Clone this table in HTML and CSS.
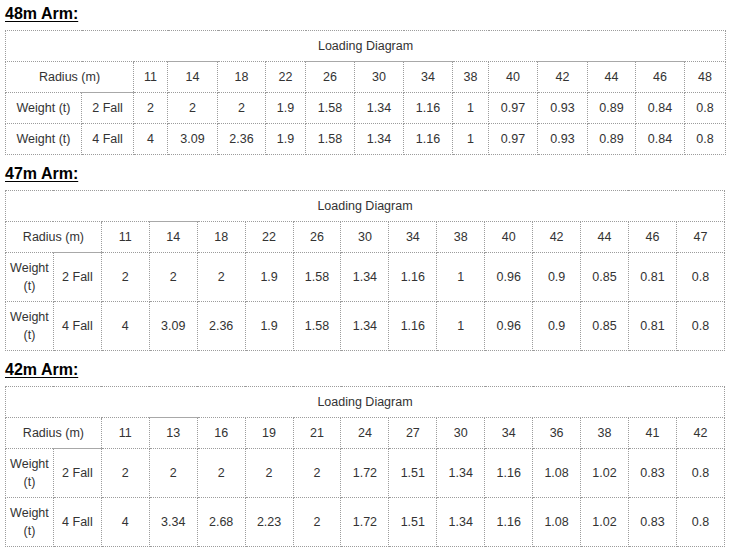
FILE: index.html
```html
<!DOCTYPE html>
<html>
<head>
<meta charset="utf-8">
<link rel="stylesheet" href="styles.css">
</head>
<body>
<div class="page">
  <section class="arm">
    <h2 class="arm-title">48m Arm:</h2>
    <table class="chart chart-auto">
      <colgroup>
        <col class="c76"><col class="c52"><col class="c34"><col class="c50"><col class="c48"><col class="c40"><col class="c49"><col class="c49"><col class="c49"><col class="c36"><col class="c49"><col class="c50"><col class="c48"><col class="c49"><col class="c41">
      </colgroup>
      <tr><td colspan="15">Loading Diagram</td></tr>
      <tr><td colspan="2">Radius (m)</td><td>11</td><td class="solid-top">14</td><td>18</td><td>22</td><td class="solid-top">26</td><td class="solid-top">30</td><td class="solid-top">34</td><td>38</td><td>40</td><td class="solid-top">42</td><td class="solid-top">44</td><td class="solid-top">46</td><td>48</td></tr>
      <tr><td>Weight (t)</td><td class="solid-top">2 Fall</td><td>2</td><td>2</td><td>2</td><td>1.9</td><td>1.58</td><td>1.34</td><td>1.16</td><td>1</td><td>0.97</td><td>0.93</td><td>0.89</td><td>0.84</td><td>0.8</td></tr>
      <tr><td>Weight (t)</td><td>4 Fall</td><td>4</td><td>3.09</td><td>2.36</td><td>1.9</td><td>1.58</td><td>1.34</td><td>1.16</td><td>1</td><td>0.97</td><td>0.93</td><td>0.89</td><td>0.84</td><td>0.8</td></tr>
    </table>
  </section>

  <section class="arm">
    <h2 class="arm-title">47m Arm:</h2>
    <table class="chart chart-even">
      <tr><td colspan="15">Loading Diagram</td></tr>
      <tr><td colspan="2">Radius (m)</td><td>11</td><td class="solid-top">14</td><td>18</td><td>22</td><td>26</td><td>30</td><td>34</td><td>38</td><td>40</td><td>42</td><td>44</td><td>46</td><td>47</td></tr>
      <tr><td>Weight (t)</td><td class="solid-top">2 Fall</td><td>2</td><td>2</td><td>2</td><td>1.9</td><td>1.58</td><td>1.34</td><td>1.16</td><td>1</td><td>0.96</td><td>0.9</td><td>0.85</td><td>0.81</td><td>0.8</td></tr>
      <tr><td>Weight (t)</td><td>4 Fall</td><td>4</td><td>3.09</td><td>2.36</td><td>1.9</td><td>1.58</td><td>1.34</td><td>1.16</td><td>1</td><td>0.96</td><td>0.9</td><td>0.85</td><td>0.81</td><td>0.8</td></tr>
    </table>
  </section>

  <section class="arm">
    <h2 class="arm-title">42m Arm:</h2>
    <table class="chart chart-even">
      <tr><td colspan="15">Loading Diagram</td></tr>
      <tr><td colspan="2">Radius (m)</td><td>11</td><td class="solid-top">13</td><td>16</td><td>19</td><td>21</td><td>24</td><td>27</td><td>30</td><td>34</td><td>36</td><td>38</td><td>41</td><td>42</td></tr>
      <tr><td>Weight (t)</td><td class="solid-top">2 Fall</td><td>2</td><td>2</td><td>2</td><td>2</td><td>2</td><td>1.72</td><td>1.51</td><td>1.34</td><td>1.16</td><td>1.08</td><td>1.02</td><td>0.83</td><td>0.8</td></tr>
      <tr><td>Weight (t)</td><td>4 Fall</td><td>4</td><td>3.34</td><td>2.68</td><td>2.23</td><td>2</td><td>1.72</td><td>1.51</td><td>1.34</td><td>1.16</td><td>1.08</td><td>1.02</td><td>0.83</td><td>0.8</td></tr>
    </table>
  </section>
</div>
</body>
</html>
```

FILE: styles.css
```css
html, body {
  margin: 0;
  padding: 0;
  background: #ffffff;
}

.page {
  display: flex;
  flex-direction: column;
  gap: 10px;
  padding: 5px 0 0 5px;
  font-family: "Liberation Sans", Arial, sans-serif;
}

.arm {
  display: flex;
  flex-direction: column;
}

.arm-title {
  margin: 0 0 7px 0;
  font-size: 16px;
  line-height: 18px;
  font-weight: bold;
  color: #000;
  text-decoration: underline;
  text-underline-offset: 2px;
}

.chart {
  width: 720px;
  border-collapse: collapse;
  table-layout: fixed;
  border: 1px dotted #9c9c9c;
  font-size: 12.5px;
  line-height: 18px;
  color: #333;
}

.chart td {
  border: 1px dotted #9c9c9c;
  padding: 6px 2px;
  text-align: center;
  vertical-align: middle;
}

.chart td.solid-top {
  border-top: 1px solid #a8a8a8;
}

.c76 { width: 76px; }
.c52 { width: 52px; }
.c50 { width: 50px; }
.c49 { width: 49px; }
.c48 { width: 48px; }
.c41 { width: 41px; }
.c40 { width: 40px; }
.c36 { width: 36px; }
.c34 { width: 34px; }
```
